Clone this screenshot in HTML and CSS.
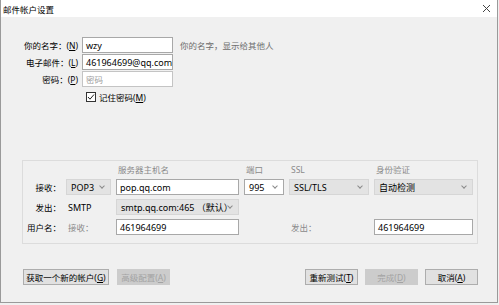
FILE: index.html
```html
<!DOCTYPE html>
<html>
<head>
    <title>邮件帐户设置</title>
    <link rel="stylesheet" href="styles.css">
</head>
<body>
    <div class="window">
        <div class="titlebar">
            <span class="title">邮件帐户设置</span>
            <svg class="close" width="9" height="9" viewBox="0 0 9 9"><path d="M1 1 L8 8 M8 1 L1 8" stroke="#444" stroke-width="1" fill="none"/></svg>
        </div>

        <div class="account">
            <div class="label">你的名字：(<u>N</u>)</div>
            <div class="field">wzy</div>
            <div class="hint">你的名字，显示给其他人</div>

            <div class="label">电子邮件：(<u>L</u>)</div>
            <div class="field">461964699@qq.com</div>
            <div></div>

            <div class="label">密码：(<u>P</u>)</div>
            <div class="field soft"><span class="placeholder">密码</span></div>
            <div></div>

            <div></div>
            <div class="remember">
                <span class="checkbox">
                    <svg width="8" height="8" viewBox="0 0 8 8"><path d="M1 4 L3 6.2 L7 1.5" stroke="#222" stroke-width="1" fill="none"/></svg>
                </span>
                <span>记住密码(<u>M</u>)</span>
            </div>
        </div>

        <div class="server">
            <div></div>
            <div></div>
            <div class="head">服务器主机名</div>
            <div class="head">端口</div>
            <div class="head">SSL</div>
            <div class="head">身份验证</div>

            <div class="label">接收：</div>
            <div class="select gray">POP3<span class="arrow"></span></div>
            <div class="field">pop.qq.com</div>
            <div class="select white">995<span class="arrow"></span></div>
            <div class="select gray">SSL/TLS<span class="arrow"></span></div>
            <div class="select gray">自动检测<span class="arrow"></span></div>

            <div class="label">发出：</div>
            <div class="plain">SMTP</div>
            <div class="select gray">smtp.qq.com:465 （默认）<span class="arrow"></span></div>
            <div></div>
            <div></div>
            <div></div>

            <div class="label">用户名：</div>
            <div class="plain muted">接收：</div>
            <div class="field">461964699</div>
            <div></div>
            <div class="plain muted">发出：</div>
            <div class="field">461964699</div>
        </div>

        <div class="actions">
            <button class="btn wide">获取一个新的帐户(<u>G</u>)</button>
            <button class="btn off">高级配置(<u>A</u>)</button>
            <span class="spacer"></span>
            <button class="btn">重新测试(<u>T</u>)</button>
            <button class="btn off">完成(<u>D</u>)</button>
            <button class="btn">取消(<u>A</u>)</button>
        </div>
    </div>
</body>
</html>
```

FILE: styles.css
```css
body {
    margin: 0;
    background: #f0f0f0;
    font-family: "Noto Sans", "Noto Sans CJK SC", sans-serif;
    font-size: 8.5px;
    color: #000;
}
.window {
    width: 496px;
    height: 302px;
    background: #f0f0f0;
    border-left: 1px solid #9a9a9a;
    border-right: 1px solid #9a9a9a;
    border-bottom: 1px solid #9a9a9a;
}
.titlebar {
    height: 17px;
    background: #fff;
    display: flex;
    align-items: center;
    justify-content: space-between;
    padding: 0 6px 0 2px;
}
.title {
    font-size: 8.5px;
}
.close {
    margin-top: -1px;
}
.account {
    display: grid;
    grid-template-columns: 77px 91px auto;
    grid-template-rows: 16px 16px 16px 17px;
    column-gap: 4px;
    row-gap: 1px;
    margin-top: 20px;
}
.account .hint {
    margin-left: 3px;
}
.label {
    display: flex;
    align-items: center;
    justify-content: flex-end;
    white-space: nowrap;
}
.hint {
    display: flex;
    align-items: center;
    color: #6d6d6d;
}
.field {
    display: flex;
    align-items: center;
    box-sizing: border-box;
    height: 16px;
    padding-left: 3px;
    background: #fff;
    border: 1px solid #a8a8a8;
    font-size: 9px;
    white-space: nowrap;
    overflow: hidden;
}
.field.soft {
    border-color: #c4c4c4;
}
.placeholder {
    color: #a0a0a0;
    font-size: 8.5px;
}
.remember {
    display: flex;
    align-items: center;
    gap: 3px;
    margin-left: 4px;
    grid-column: 2 / 4;
}
.checkbox {
    width: 8px;
    height: 8px;
    border: 1px solid #333;
    background: #fff;
    display: flex;
    align-items: center;
    justify-content: center;
}
.server {
    display: grid;
    grid-template-columns: 38px 45px 123px 40px 80px 99px;
    grid-template-rows: 14px 16px 16px 16px;
    column-gap: 5px;
    row-gap: 4px;
    width: 454px;
    margin: 55px 0 0 21px;
    padding-bottom: 8px;
    border: 1px solid #dcdcdc;
}
.head {
    align-self: end;
    padding-left: 2px;
    color: #8a8a8a;
    white-space: nowrap;
}
.plain {
    display: flex;
    align-items: center;
    padding-left: 2px;
    font-size: 9px;
    white-space: nowrap;
}
.muted {
    color: #8a8a8a;
    font-size: 8.5px;
}
.select {
    position: relative;
    display: flex;
    align-items: center;
    box-sizing: border-box;
    height: 16px;
    padding-left: 4px;
    font-size: 9px;
    white-space: nowrap;
}
.select.gray {
    background: #e3e3e3;
    border: 1px solid #d6d6d6;
}
.select.white {
    background: #fff;
    border: 1px solid #a8a8a8;
}
.arrow {
    position: absolute;
    right: 6px;
    top: 4px;
    width: 3px;
    height: 3px;
    border-right: 1px solid #8a8a8a;
    border-bottom: 1px solid #8a8a8a;
    transform: rotate(45deg);
}
.actions {
    display: flex;
    align-items: center;
    gap: 7px;
    margin: 25px 19px 0 22px;
}
.spacer {
    flex: 1;
}
.btn {
    height: 16px;
    width: 53px;
    padding: 0;
    font-family: inherit;
    font-size: 8.5px;
    color: #000;
    background: #e1e1e1;
    border: 1px solid #adadad;
}
.btn.wide {
    width: 86px;
    margin-right: 1px;
}
.btn.off {
    background: #cccccc;
    border-color: #cccccc;
    color: #a3a3a3;
}
```
